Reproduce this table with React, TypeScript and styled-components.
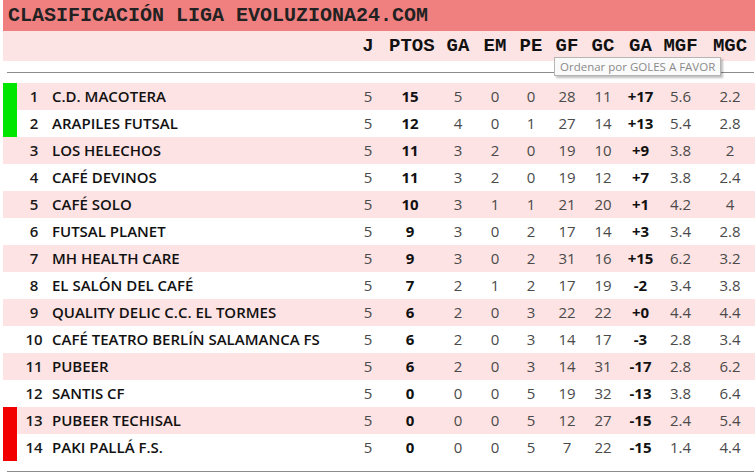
import React from "react";
import styled, { createGlobalStyle } from "styled-components";

const GlobalStyle = createGlobalStyle`
  html, body { margin: 0; padding: 0; background: #ffffff; }
  body { font-family: "Open Sans", "Liberation Sans", sans-serif; }
`;

const COLS = "14px 34px 296px 42px 42px 46px 36px 36px 36px 36px 39px 45px 50px";

const Page = styled.div`
  position: relative;
  width: 752px;
  padding-left: 3px;
`;

const TitleBar = styled.div`
  height: 31px;
  background: #f08080;
  color: #222;
  font-family: "Liberation Mono", "Courier New", monospace;
  font-weight: bold;
  font-size: 20px;
  line-height: 31px;
  padding-left: 5px;
  white-space: nowrap;
`;

const HeaderRow = styled.div`
  display: grid;
  grid-template-columns: ${COLS};
  height: 30px;
  background: #fde4e4;
  align-items: center;
`;

const HeadCell = styled.div<{ $shift?: number }>`
  text-align: center;
  font-family: "Liberation Mono", "Courier New", monospace;
  font-weight: bold;
  font-size: 19px;
  color: #111;
  padding-left: ${(p) => (p.$shift && p.$shift > 0 ? p.$shift : 0)}px;
  padding-right: ${(p) => (p.$shift && p.$shift < 0 ? -p.$shift : 0)}px;
  white-space: nowrap;
`;

const Divider = styled.div<{ $top: number }>`
  margin: ${(p) => p.$top}px 1px 10px 4px;
  border-top: 1px solid #8c8c8c;
`;

const Rows = styled.div`
  display: flex;
  flex-direction: column;
`;

const Row = styled.div<{ $pink: boolean }>`
  display: grid;
  grid-template-columns: ${COLS};
  height: 27px;
  align-items: center;
  background: ${(p) => (p.$pink ? "#fde3e3" : "#ffffff")};
`;

const Marker = styled.div<{ $color?: string }>`
  align-self: stretch;
  background: ${(p) => p.$color ?? "transparent"};
`;

const Rank = styled.div`
  text-align: center;
  font-size: 15px;
  font-weight: 600;
  color: #1a1a1a;
  padding-bottom: 2px;
`;

const Team = styled.div`
  padding-left: 1px;
  padding-bottom: 2px;
  font-size: 15px;
  font-weight: 600;
  color: #111;
  white-space: nowrap;
  overflow: hidden;
`;

const Stat = styled.div<{ $bold?: boolean; $shift?: number }>`
  text-align: center;
  font-size: 15px;
  padding-bottom: 2px;
  font-weight: ${(p) => (p.$bold ? 700 : 400)};
  color: ${(p) => (p.$bold ? "#111" : "#4a4a4a")};
  padding-left: ${(p) => (p.$shift && p.$shift > 0 ? p.$shift : 0)}px;
  padding-right: ${(p) => (p.$shift && p.$shift < 0 ? -p.$shift : 0)}px;
`;

const Tooltip = styled.div`
  position: absolute;
  left: 554px;
  top: 57px;
  height: 17px;
  padding: 0 5px;
  background: #fafafa;
  border: 1px solid #b5b5b5;
  box-shadow: 2px 2px 2px rgba(0, 0, 0, 0.25);
  color: #8a8a8a;
  font-family: "Open Sans", "Liberation Sans", sans-serif;
  font-size: 11.5px;
  line-height: 17px;
  white-space: nowrap;
`;

type TeamRow = {
  name: string;
  s: (string | number)[];
  mark?: string;
};

const teams: TeamRow[] = [
  { name: "C.D. MACOTERA", s: [5, 15, 5, 0, 0, 28, 11, "+17", "5.6", "2.2"], mark: "#00e600" },
  { name: "ARAPILES FUTSAL", s: [5, 12, 4, 0, 1, 27, 14, "+13", "5.4", "2.8"], mark: "#00e600" },
  { name: "LOS HELECHOS", s: [5, 11, 3, 2, 0, 19, 10, "+9", "3.8", "2"] },
  { name: "CAFÉ DEVINOS", s: [5, 11, 3, 2, 0, 19, 12, "+7", "3.8", "2.4"] },
  { name: "CAFÉ SOLO", s: [5, 10, 3, 1, 1, 21, 20, "+1", "4.2", "4"] },
  { name: "FUTSAL PLANET", s: [5, 9, 3, 0, 2, 17, 14, "+3", "3.4", "2.8"] },
  { name: "MH HEALTH CARE", s: [5, 9, 3, 0, 2, 31, 16, "+15", "6.2", "3.2"] },
  { name: "EL SALÓN DEL CAFÉ", s: [5, 7, 2, 1, 2, 17, 19, "-2", "3.4", "3.8"] },
  { name: "QUALITY DELIC C.C. EL TORMES", s: [5, 6, 2, 0, 3, 22, 22, "+0", "4.4", "4.4"] },
  { name: "CAFÉ TEATRO BERLÍN SALAMANCA FS", s: [5, 6, 2, 0, 3, 14, 17, "-3", "2.8", "3.4"] },
  { name: "PUBEER", s: [5, 6, 2, 0, 3, 14, 31, "-17", "2.8", "6.2"] },
  { name: "SANTIS CF", s: [5, 0, 0, 0, 5, 19, 32, "-13", "3.8", "6.4"] },
  { name: "PUBEER TECHISAL", s: [5, 0, 0, 0, 5, 12, 27, "-15", "2.4", "5.4"], mark: "#f20000" },
  { name: "PAKI PALLÁ F.S.", s: [5, 0, 0, 0, 5, 7, 22, "-15", "1.4", "4.4"], mark: "#f20000" },
];

const headers = ["J", "PTOS", "GA", "EM", "PE", "GF", "GC", "GA", "MGF", "MGC"];
const shifts = [0, 0, 8, 0, 0, 0, 0, 0, -4, 0];
const boldCols = new Set([1, 7]);

export default function App() {
  return (
    <>
      <GlobalStyle />
      <Page>
        <TitleBar>CLASIFICACIÓN LIGA EVOLUZIONA24.COM</TitleBar>
        <HeaderRow>
          <div />
          <div />
          <div />
          {headers.map((h, i) => (
            <HeadCell key={i} $shift={shifts[i]}>
              {h}
            </HeadCell>
          ))}
        </HeaderRow>
        <Divider $top={11} />
        <Rows>
          {teams.map((t, i) => (
            <Row key={t.name} $pink={i % 2 === 0}>
              <Marker $color={t.mark} />
              <Rank>{i + 1}</Rank>
              <Team>{t.name}</Team>
              {t.s.map((v, j) => (
                <Stat key={j} $bold={boldCols.has(j)} $shift={shifts[j]}>
                  {v}
                </Stat>
              ))}
            </Row>
          ))}
        </Rows>
        <Divider $top={10} />
        <Tooltip>Ordenar por GOLES A FAVOR</Tooltip>
      </Page>
    </>
  );
}
